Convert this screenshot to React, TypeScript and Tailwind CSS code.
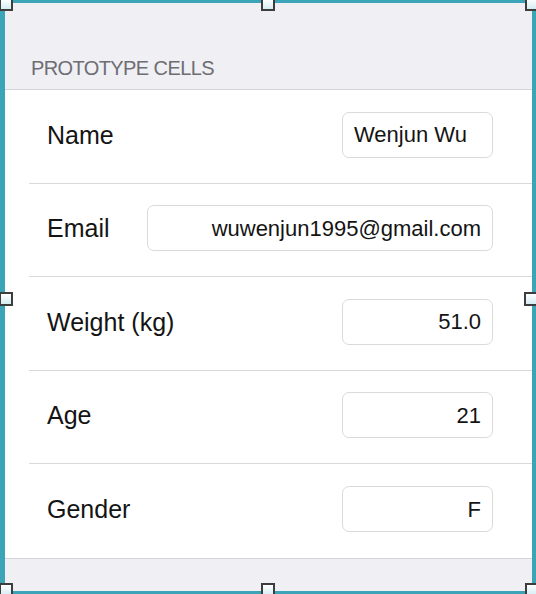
import React from 'react'

type Row = { label: string; value: string; wide?: boolean; align?: 'left' | 'right' }

const rows: Row[] = [
    { label: 'Name', value: 'Wenjun Wu', align: 'left' },
    { label: 'Email', value: 'wuwenjun1995@gmail.com', wide: true },
    { label: 'Weight (kg)', value: '51.0' },
    { label: 'Age', value: '21' },
    { label: 'Gender', value: 'F' },
]

// resize handles sitting on the selection frame
const Handle = ({ className }: { className: string }) => (
    <div
        className={`absolute h-[14px] w-[14px] border-2 border-[#3d3d3d] bg-gradient-to-b from-[#ffffff] to-[#d6ecf2] ${className}`}
    />
)

const App = () => {
    return (
        <div className="relative h-[594px] w-[536px] overflow-hidden font-['Liberation_Sans',Arial,sans-serif]">
            <div className="flex h-full w-full flex-col border-t-[3px] border-r-[4px] border-b-[3px] border-l-[5px] border-[#3ba5b7] bg-[#efeff4]">
                <div className="h-[86px] pl-[26px] pt-[55px] text-[20px] leading-[20px] tracking-[-0.6px] text-[#6d6d72]">
                    PROTOTYPE CELLS
                </div>

                <div className="border-y border-[#d3d3d8] bg-white">
                    {rows.map((row, i) => (
                        <div key={row.label} className="pl-[24px]">
                            <div
                                className={`flex h-[93.5px] items-center pb-[3px] pl-[18px] pr-[39px] ${
                                    i < rows.length - 1 ? 'border-b border-[#d9d9dd]' : ''
                                }`}
                            >
                                <span className="flex-1 text-[25px] leading-[30px] text-[#141414]">{row.label}</span>
                                <div
                                    className={`flex h-[46px] items-center rounded-[7px] border border-[#dadada] px-[11px] text-[22px] text-[#141414] ${
                                        row.wide ? 'w-[346px]' : 'w-[151px]'
                                    } ${row.align === 'left' ? 'justify-start' : 'justify-end'}`}
                                >
                                    {row.value}
                                </div>
                            </div>
                        </div>
                    ))}
                </div>
            </div>

            <Handle className="-left-[1px] -top-[3px]" />
            <Handle className="left-[261px] -top-[3px]" />
            <Handle className="left-[525px] -top-[3px]" />
            <Handle className="-left-[1px] top-[292px]" />
            <Handle className="left-[524px] top-[292px]" />
            <Handle className="-left-[1px] top-[583px]" />
            <Handle className="left-[261px] top-[583px]" />
            <Handle className="left-[525px] top-[583px]" />
        </div>
    )
}

export default App
